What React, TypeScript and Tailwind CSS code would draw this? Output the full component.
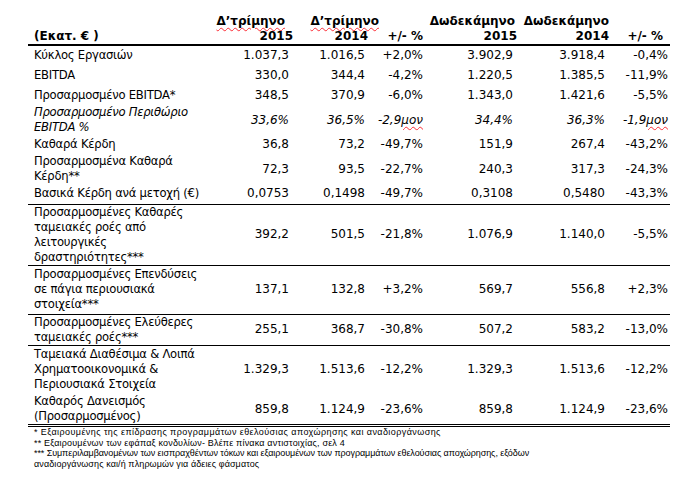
import React from "react";

type Row = {
  label: React.ReactNode;
  values: React.ReactNode[];
  h: string;
  italic?: boolean;
  line?: boolean;
};

const Spell = ({ children }: { children: React.ReactNode }) => (
  <span className="underline decoration-wavy decoration-red-500 decoration-1 underline-offset-2">
    {children}
  </span>
);

const rows: Row[] = [
  { label: "Κύκλος Εργασιών", values: ["1.037,3", "1.016,5", "+2,0%", "3.902,9", "3.918,4", "-0,4%"], h: "h-[20px]" },
  { label: "EBITDA", values: ["330,0", "344,4", "-4,2%", "1.220,5", "1.385,5", "-11,9%"], h: "h-[20px]" },
  { label: "Προσαρμοσμένο EBITDA*", values: ["348,5", "370,9", "-6,0%", "1.343,0", "1.421,6", "-5,5%"], h: "h-[20px]" },
  {
    label: "Προσαρμοσμένο Περιθώριο EBITDA %",
    values: [
      "33,6%",
      "36,5%",
      <>-2,9<Spell>μον</Spell></>,
      "34,4%",
      "36,3%",
      <>-1,9<Spell>μον</Spell></>,
    ],
    h: "h-[30px]",
    italic: true,
  },
  { label: "Καθαρά Κέρδη", values: ["36,8", "73,2", "-49,7%", "151,9", "267,4", "-43,2%"], h: "h-[19px]" },
  { label: "Προσαρμοσμένα Καθαρά Κέρδη**", values: ["72,3", "93,5", "-22,7%", "240,3", "317,3", "-24,3%"], h: "h-[30px]" },
  { label: "Βασικά Κέρδη ανά μετοχή (€)", values: ["0,0753", "0,1498", "-49,7%", "0,3108", "0,5480", "-43,3%"], h: "h-[20px]", line: true },
  {
    label: "Προσαρμοσμένες Καθαρές ταμειακές ροές από λειτουργικές δραστηριότητες***",
    values: ["392,2", "501,5", "-21,8%", "1.076,9", "1.140,0", "-5,5%"],
    h: "h-[61px]",
    line: true,
  },
  {
    label: "Προσαρμοσμένες Επενδύσεις σε πάγια περιουσιακά στοιχεία***",
    values: ["137,1", "132,8", "+3,2%", "569,7", "556,8", "+2,3%"],
    h: "h-[49px]",
    line: true,
  },
  {
    label: "Προσαρμοσμένες Ελεύθερες ταμειακές ροές***",
    values: ["255,1", "368,7", "-30,8%", "507,2", "583,2", "-13,0%"],
    h: "h-[31px]",
    line: true,
  },
  {
    label: "Ταμειακά Διαθέσιμα & Λοιπά Χρηματοοικονομικά & Περιουσιακά Στοιχεία",
    values: ["1.329,3", "1.513,6", "-12,2%", "1.329,3", "1.513,6", "-12,2%"],
    h: "h-[49px]",
  },
  {
    label: "Καθαρός Δανεισμός (Προσαρμοσμένος)",
    values: ["859,8", "1.124,9", "-23,6%", "859,8", "1.124,9", "-23,6%"],
    h: "h-[30px]",
  },
];

const valuePad = ["pr-[4px]", "pr-[5px]", "pr-[3px]", "pr-[4px]", "pr-[4px]", "pr-[2px]"];

export default function App() {
  return (
    <div className="w-[686px] h-[494px] bg-white text-black font-['DejaVu_Sans',sans-serif] pl-[28px] pt-[14px]">
      <table className="table-fixed border-collapse w-[642px] text-[12px] leading-[15px]">
        <colgroup>
          <col className="w-[182px]" />
          <col className="w-[83px]" />
          <col className="w-[77px]" />
          <col className="w-[56px]" />
          <col className="w-[91px]" />
          <col className="w-[92px]" />
          <col className="w-[61px]" />
        </colgroup>
        <thead>
          <tr className="border-b-2 border-black font-bold h-[30px]">
            <th className="text-left align-bottom pl-[6px] font-bold">(Εκατ. € )</th>
            <th className="text-right align-bottom whitespace-nowrap font-bold">
              <div className="mr-[8px]"><Spell>Δ’τρίμηνο</Spell></div>
              <div>2015</div>
            </th>
            <th className="text-right align-bottom whitespace-nowrap font-bold">
              <div className="-mr-[9px]"><Spell>Δ’τρίμηνο</Spell></div>
              <div className="pr-[2px]">2014</div>
            </th>
            <th className="text-right align-bottom pr-[3px] whitespace-nowrap font-bold">+/- %</th>
            <th className="text-right align-bottom whitespace-nowrap font-bold">
              <div className="mr-[2px]">Δωδεκάμηνο</div>
              <div>2015</div>
            </th>
            <th className="text-right align-bottom whitespace-nowrap font-bold">
              <div>Δωδεκάμηνο</div>
              <div>2014</div>
            </th>
            <th className="text-right align-bottom pr-[7px] whitespace-nowrap font-bold">+/- %</th>
          </tr>
        </thead>
        <tbody>
          {rows.map((r, i) => (
            <tr
              key={i}
              className={`${r.h} ${r.italic ? "italic" : ""} ${
                r.line ? "border-b border-black" : ""
              } ${i === rows.length - 1 ? "border-b-[3px] border-double border-black" : ""}`}
            >
              <td className="pl-[6px] pr-0 align-middle text-[11.6px] tracking-[-0.25px]">{r.label}</td>
              {r.values.map((v, j) => (
                <td key={j} className={`text-right align-middle whitespace-nowrap ${valuePad[j]}`}>
                  {v}
                </td>
              ))}
            </tr>
          ))}
        </tbody>
      </table>
      <div className="pl-[6px] text-[9px] leading-[10.5px] font-['Liberation_Sans',sans-serif] whitespace-nowrap">
        <p className="tracking-[0.42px]">* Εξαιρουμένης της επίδρασης προγραμμάτων εθελούσιας αποχώρησης και αναδιοργάνωσης</p>
        <p className="tracking-[0.18px]">** Εξαιρουμένων των εφάπαξ κονδυλίων- Βλέπε πίνακα αντιστοιχίας, σελ 4</p>
        <p className="tracking-[-0.08px]">
          *** Συμπεριλαμβανομένων των εισπραχθέντων τόκων και εξαιρουμένων των προγραμμάτων εθελούσιας αποχώρησης, εξόδων
        </p>
        <p className="tracking-[0.1px]">αναδιοργάνωσης και/ή πληρωμών για άδειες φάσματος</p>
      </div>
    </div>
  );
}
